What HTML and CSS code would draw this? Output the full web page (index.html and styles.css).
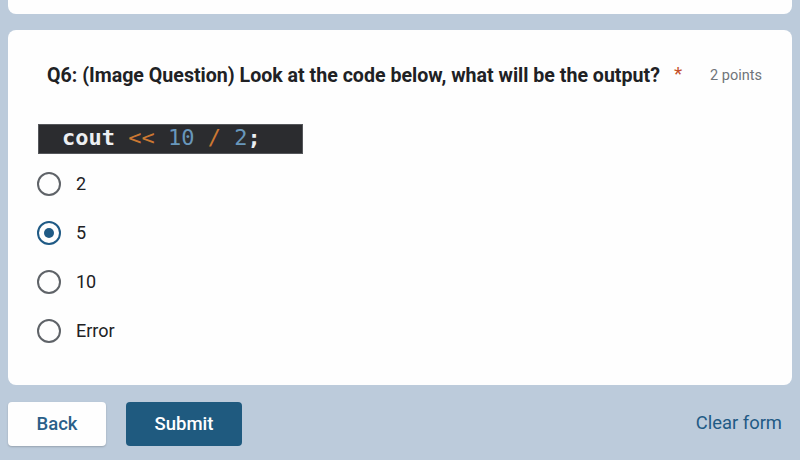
FILE: index.html
```html
<!DOCTYPE html>
<html>
<head>
<meta charset="utf-8">
<link rel="stylesheet" href="styles.css">
</head>
<body>
<div class="page">
  <div class="card card-top"></div>
  <div class="card card-q">
    <div class="q-head">
      <span class="q-title">Q6: (Image Question) Look at the code below, what will be the output?</span>
      <span class="q-star">*</span>
      <span class="q-points">2 points</span>
    </div>
    <div class="code-img"><span class="c-w">cout</span> <span class="c-o">&lt;&lt;</span> <span class="c-b">10</span> <span class="c-o">/</span> <span class="c-b">2</span><span class="c-w">;</span></div>
    <div class="options">
      <div class="opt"><span class="radio"></span><span class="opt-label">2</span></div>
      <div class="opt"><span class="radio checked"></span><span class="opt-label">5</span></div>
      <div class="opt"><span class="radio"></span><span class="opt-label">10</span></div>
      <div class="opt"><span class="radio"></span><span class="opt-label">Error</span></div>
    </div>
  </div>
  <div class="actions">
    <button class="btn btn-back">Back</button>
    <button class="btn btn-submit">Submit</button>
    <span class="clear">Clear form</span>
  </div>
</div>
</body>
</html>
```
FILE: styles.css
```css
html, body {
  margin: 0;
  padding: 0;
  background: #bccbdb;
  height: 460px;
  overflow: hidden;
  font-family: Roboto, "Liberation Sans", sans-serif;
}
.page {
  padding: 0 8px;
  display: flex;
  flex-direction: column;
}
.card {
  background: #fefefe;
  border-radius: 8px;
}
.card-top {
  height: 14px;
  border-radius: 0 0 8px 8px;
  margin-bottom: 16px;
}
.card-q {
  height: 355px;
  box-sizing: border-box;
  padding: 33px 30px 0 30px;
}
.q-head {
  margin-left: 9px;
  display: flex;
  align-items: center;
  height: 24px;
}
.q-title {
  font-size: 19.6px;
  font-weight: 700;
  color: #202124;
  white-space: nowrap;
}
.q-star {
  color: #c5502a;
  font-size: 19px;
  margin-left: 14px;
  margin-top: -4px;
}
.q-points {
  margin-left: auto;
  font-size: 14.5px;
  color: #70757a;
}
.code-img {
  margin-top: 37px;
  width: 265px;
  height: 30px;
  box-sizing: border-box;
  background: #2b2c2f;
  border: 1px solid #55575b;
  padding-left: 23px;
  font-family: "DejaVu Sans Mono", monospace;
  font-size: 22px;
  font-weight: 700;
  line-height: 26px;
  white-space: pre;
}
.c-w { color: #eceff2; }
.c-o { color: #cc7832; font-weight: 400; }
.c-b { color: #6897bb; font-weight: 400; }
.options {
  display: flex;
  flex-direction: column;
  margin-top: 5px;
}
.opt {
  display: flex;
  align-items: center;
  height: 49px;
}
.radio {
  width: 24px;
  height: 24px;
  box-sizing: border-box;
  border: 2px solid #5f6368;
  border-radius: 50%;
  margin-left: -1px;
  display: flex;
  align-items: center;
  justify-content: center;
}
.radio.checked {
  border-color: #1f5a85;
}
.radio.checked::after {
  content: "";
  width: 10px;
  height: 10px;
  border-radius: 50%;
  background: #1f5a85;
}
.opt-label {
  margin-left: 15px;
  font-size: 18px;
  color: #202124;
}
.actions {
  display: flex;
  align-items: center;
  margin-top: 17px;
  height: 44px;
}
.btn {
  height: 44px;
  border: none;
  border-radius: 4px;
  font-family: Roboto, "Liberation Sans", sans-serif;
  font-size: 18.5px;
  font-weight: 500;
  cursor: pointer;
}
.btn-back {
  width: 98px;
  background: #fefefe;
  color: #2a5f89;
  box-shadow: 0 1px 2px rgba(0,0,0,0.2);
}
.btn-submit {
  width: 116px;
  margin-left: 20px;
  background: #1f5a7f;
  color: #ffffff;
}
.clear {
  margin-left: auto;
  margin-right: 10px;
  margin-bottom: 4px;
  font-size: 18.4px;
  font-weight: 400;
  color: #1f5a85;
}
```
